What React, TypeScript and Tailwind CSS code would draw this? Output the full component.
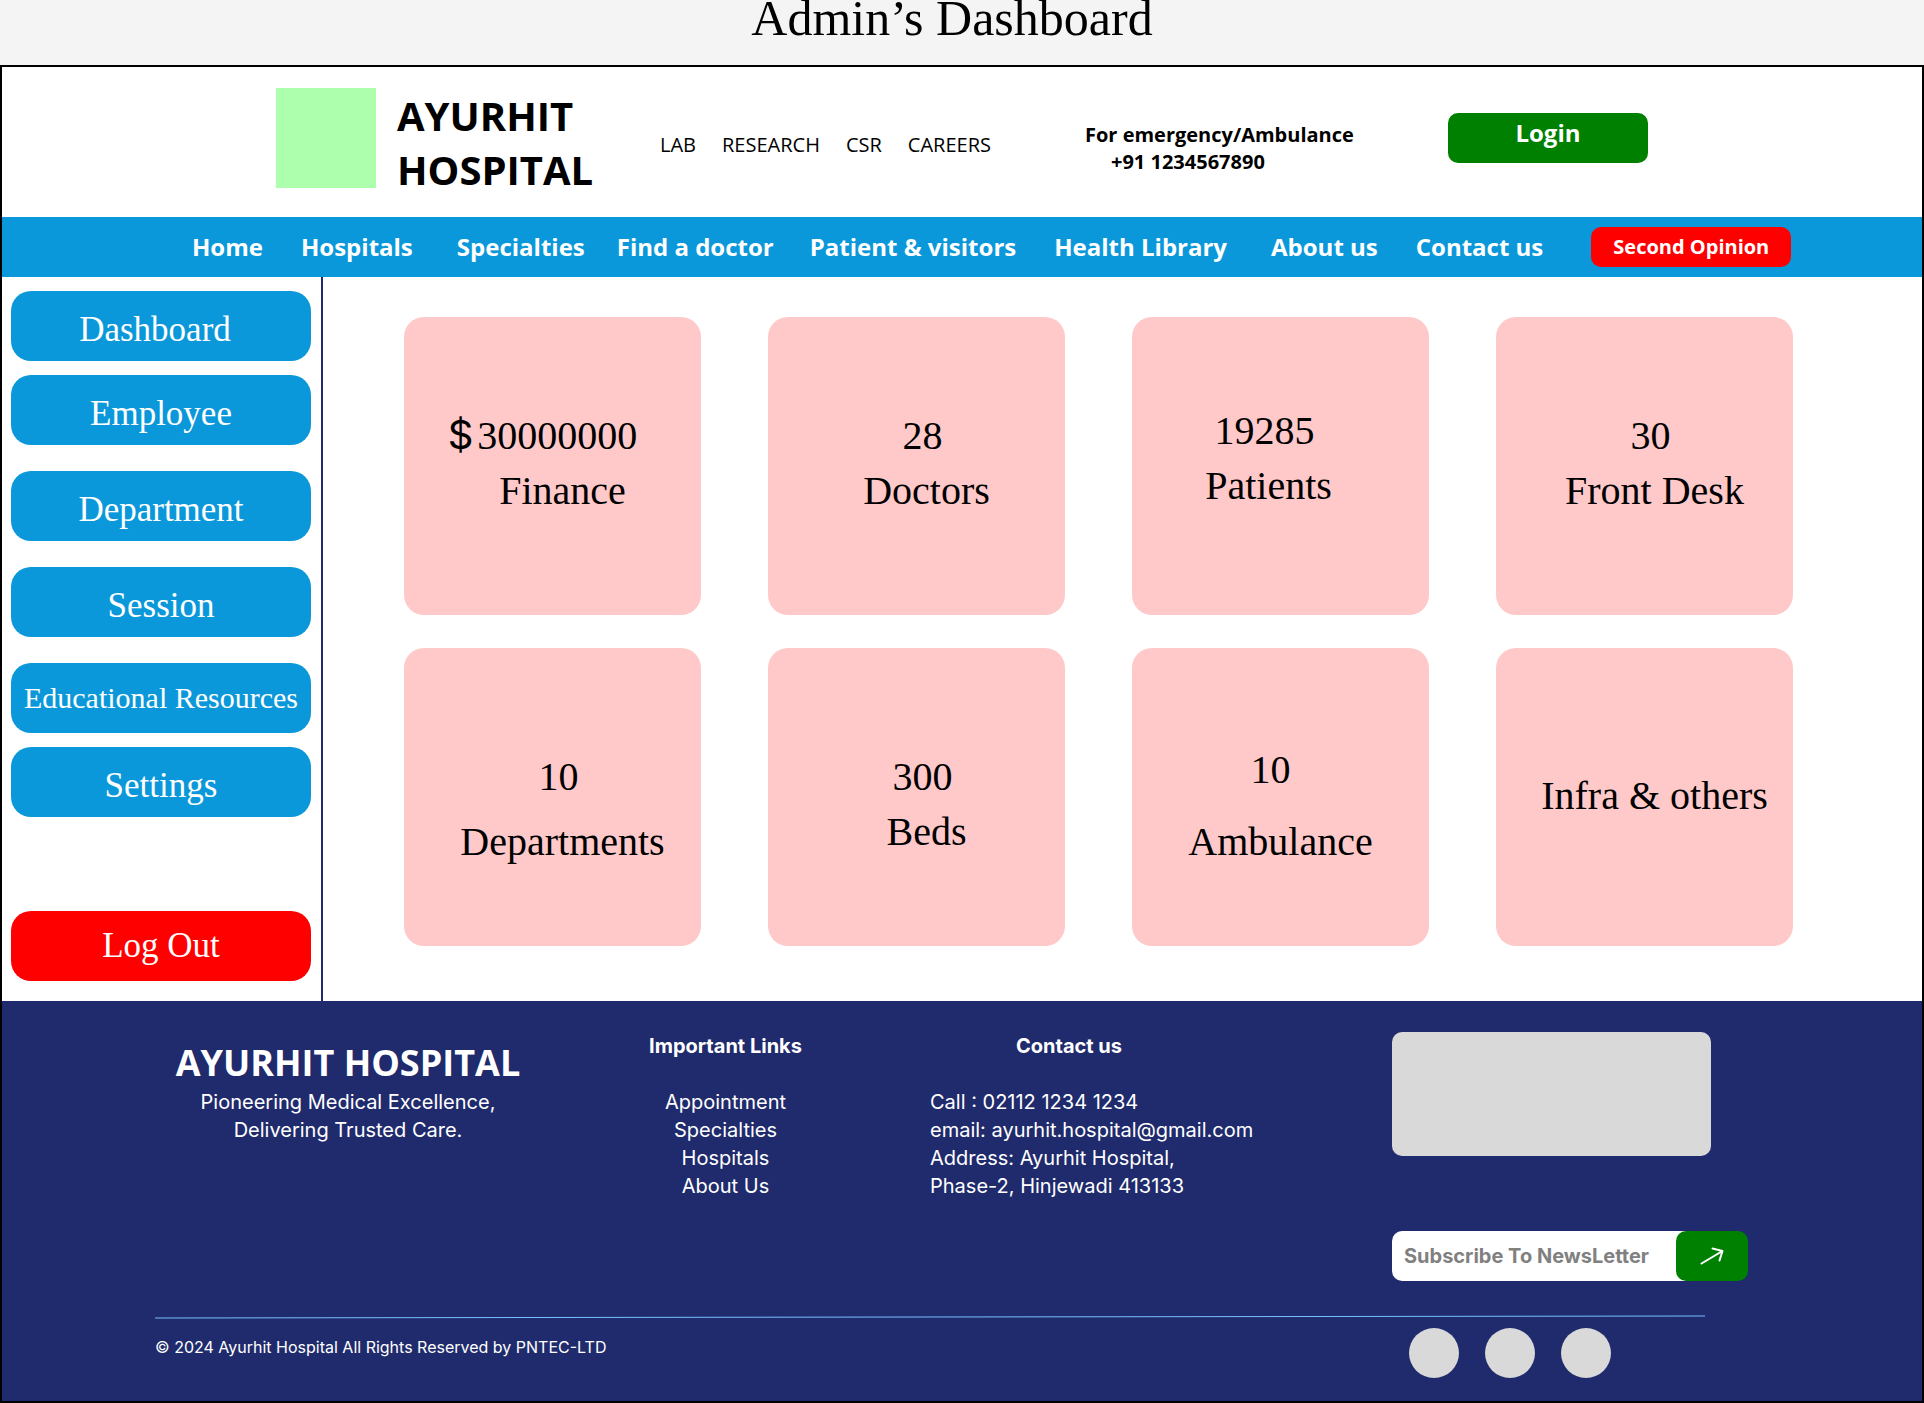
const TOP_LINKS = ["LAB", "RESEARCH", "CSR", "CAREERS"];

const NAV_LINKS = [
  { label: "Home", space: "mr-[38px]" },
  { label: "Hospitals", space: "mr-11" },
  { label: "Specialties", space: "mr-8" },
  { label: "Find a doctor", space: "mr-9" },
  { label: "Patient & visitors", space: "mr-[38px]" },
  { label: "Health Library", space: "mr-11" },
  { label: "About us", space: "mr-[38px]" },
  { label: "Contact us", space: "mr-12" },
];

const SIDE_LINKS = [
  { label: "Dashboard", style: "mt-0 pt-2 pr-3 text-[35px]" },
  { label: "Employee", style: "mt-3.5 pt-2 text-[35px]" },
  { label: "Department", style: "mt-[26px] pt-2 text-[35px]" },
  { label: "Session", style: "mt-[26px] pt-2 text-[35px]" },
  { label: "Educational Resources", style: "mt-[26px] text-3xl" },
  { label: "Settings", style: "mt-3.5 pt-2 text-[35px]" },
];

type Card = {
  label: string;
  value?: string;
  currency?: boolean;
  cardStyle: string;
  valueStyle?: string;
  labelStyle: string;
};

const CARDS: Card[] = [
  { value: "30000000", currency: true, label: "Finance", cardStyle: "pt-[91px]", valueStyle: "pr-5", labelStyle: "pl-5" },
  { value: "28", label: "Doctors", cardStyle: "pt-[91px]", valueStyle: "pl-3", labelStyle: "pl-5" },
  { value: "19285", label: "Patients", cardStyle: "pt-[86px]", valueStyle: "pr-8", labelStyle: "pr-6" },
  { value: "30", label: "Front Desk", cardStyle: "pt-[91px]", valueStyle: "pl-3", labelStyle: "pl-5" },
  { value: "10", label: "Departments", cardStyle: "pt-[101px]", valueStyle: "pl-3", labelStyle: "pl-5 mt-2.5" },
  { value: "300", label: "Beds", cardStyle: "pt-[101px]", valueStyle: "pl-3", labelStyle: "pl-5" },
  { value: "10", label: "Ambulance", cardStyle: "pt-[94px]", valueStyle: "pr-5", labelStyle: "mt-[17px]" },
  { label: "Infra & others", cardStyle: "pt-[120px]", labelStyle: "pl-5" },
];

const FOOTER_LINKS = ["Appointment", "Specialties", "Hospitals", "About Us"];

function Header() {
  return (
    <header className="grid h-[150px] grid-cols-[384fr_425fr_363fr_200fr] px-[274px] pt-[21px] font-['Open_Sans',sans-serif] text-black">
      <div className="flex gap-[21px]">
        <div className="size-[100px] shrink-0 bg-[#adffad]" />
        <h1 className="pt-px text-[40px] leading-[54px] font-bold">
          AYURHIT
          <br />
          HOSPITAL
        </h1>
      </div>
      <nav aria-label="Top links" className="flex gap-[26px] pt-[43px] text-xl leading-7">
        {TOP_LINKS.map((label) => (
          <a key={label} href="#">
            {label}
          </a>
        ))}
      </nav>
      <p className="pt-[33px] text-xl leading-[27px] font-bold whitespace-nowrap">
        For emergency/Ambulance
        <br />
        <span className="pl-[26px]">+91 1234567890</span>
      </p>
      <button
        type="button"
        className="mt-[25px] flex h-[50px] items-start justify-center rounded-[10px] bg-[#008000] pt-1 text-2xl font-bold text-white"
      >
        Login
      </button>
    </header>
  );
}

function MainNav() {
  return (
    <nav
      aria-label="Main"
      className="flex h-[60px] items-center bg-[#0b98da] pl-[190px] font-['Open_Sans',sans-serif] text-2xl font-bold whitespace-nowrap text-white"
    >
      {NAV_LINKS.map((item) => (
        <a key={item.label} href="#" className={item.space}>
          {item.label}
        </a>
      ))}
      <button type="button" className="h-10 w-[200px] rounded-[10px] bg-[#ff0000] text-xl font-bold">
        Second Opinion
      </button>
    </nav>
  );
}

function Sidebar() {
  return (
    <aside className="flex w-[321px] shrink-0 flex-col border-r-2 border-[#1f2b6c] pt-3.5 pr-2.5 pb-5 pl-[9px] font-['Liberation_Serif',serif] text-white">
      {SIDE_LINKS.map((item) => (
        <a
          key={item.label}
          href="#"
          className={`flex h-[70px] items-center justify-center rounded-[20px] bg-[#0b98da] whitespace-nowrap ${item.style}`}
        >
          {item.label}
        </a>
      ))}
      <button type="button" className="mt-auto h-[70px] rounded-[20px] bg-[#ff0000] text-[35px]">
        Log Out
      </button>
    </aside>
  );
}

function StatCard({ card }: { card: Card }) {
  return (
    <article
      className={`h-[298px] rounded-[20px] bg-[#ffc9c9] text-center font-['Liberation_Serif',serif] text-[40px] leading-[55px] whitespace-nowrap text-black ${card.cardStyle}`}
    >
      {card.value && (
        <p className={card.valueStyle}>
          {card.currency && <span className="pr-1 font-['Inter',sans-serif] leading-none">$</span>}
          {card.value}
        </p>
      )}
      <h2 className={card.labelStyle}>{card.label}</h2>
    </article>
  );
}

function Footer() {
  return (
    <footer className="bg-[#1f2b6c] pt-[31px] pb-[23px] font-['Inter',sans-serif] text-xl leading-7 text-white">
      <div className="grid grid-cols-[386fr_369fr_482fr_356fr] pr-[174px] pl-[153px]">
        <section className="pt-1.5 text-center">
          <h2 className="font-['Open_Sans',sans-serif] text-4xl leading-[50px] font-bold whitespace-nowrap">
            AYURHIT HOSPITAL
          </h2>
          <p>
            Pioneering Medical Excellence,
            <br />
            Delivering Trusted Care.
          </p>
        </section>
        <nav aria-label="Important Links" className="text-center">
          <h3 className="mb-7 font-bold">Important Links</h3>
          <ul>
            {FOOTER_LINKS.map((label) => (
              <li key={label}>
                <a href="#">{label}</a>
              </li>
            ))}
          </ul>
        </nav>
        <section className="pl-5">
          <h3 className="mb-7 w-[278px] text-center font-bold">Contact us</h3>
          <address className="whitespace-nowrap not-italic">
            Call : 02112 1234 1234
            <br />
            email: ayurhit.hospital@gmail.com
            <br />
            Address: Ayurhit Hospital,
            <br />
            Phase-2, Hinjewadi 413133
          </address>
        </section>
        <div className="min-w-0">
          <div className="mr-[37px] h-[124px] rounded-[10px] bg-[#d9d9d9]" />
          <form className="mt-[75px] flex h-[50px]">
            <input
              type="email"
              aria-label="Subscribe To NewsLetter"
              placeholder="Subscribe To NewsLetter"
              className="-mr-3 w-0 min-w-0 flex-1 rounded-l-[10px] bg-white pl-3 font-bold text-black placeholder:text-[#808080] placeholder:opacity-100"
            />
            <button
              type="button"
              aria-label="Subscribe"
              className="relative flex w-[72px] shrink-0 items-center justify-center rounded-[10px] bg-[#008000]"
            >
              <svg width="24" height="18" viewBox="0 0 24 18" fill="none" stroke="white" strokeWidth="2" strokeLinecap="round" strokeLinejoin="round">
                <path d="M1.5 16.5 22.5 4M12.5 1.5 22.5 4 19.5 13.5" />
              </svg>
            </button>
          </form>
        </div>
      </div>
      <div className="mt-[34px] mr-[217px] ml-[153px] h-1">
        <svg className="block h-1 w-full" viewBox="0 0 1550 4" preserveAspectRatio="none" fill="none">
          <path d="M0 3 1550 1" stroke="#7ac0ff" strokeWidth="1" />
        </svg>
      </div>
      <div className="mt-[9px] flex items-start justify-between pr-[311px] pl-[153px]">
        <p className="text-base leading-[38px]">© 2024 Ayurhit Hospital All Rights Reserved by PNTEC-LTD</p>
        <div className="flex gap-[26px]">
          <a href="#" aria-label="Social profile one" className="size-[50px] rounded-full bg-[#d9d9d9]" />
          <a href="#" aria-label="Social profile two" className="size-[50px] rounded-full bg-[#d9d9d9]" />
          <a href="#" aria-label="Social profile three" className="size-[50px] rounded-full bg-[#d9d9d9]" />
        </div>
      </div>
    </footer>
  );
}

export default function App() {
  return (
    <div className="bg-[#f4f4f4]">
      <p className="h-[65px] pr-5 text-center font-['Liberation_Serif',serif] text-[50px] leading-9 text-black">
        Admin’s Dashboard
      </p>
      <div className="border-2 border-black bg-white">
        <Header />
        <MainNav />
        <div className="flex min-h-[724px]">
          <Sidebar />
          <main className="grid flex-1 grid-cols-4 content-start gap-x-[67px] gap-y-[33px] pt-10 pr-[129px] pl-[81px]">
            {CARDS.map((card) => (
              <StatCard key={card.label} card={card} />
            ))}
          </main>
        </div>
        <Footer />
      </div>
    </div>
  );
}
